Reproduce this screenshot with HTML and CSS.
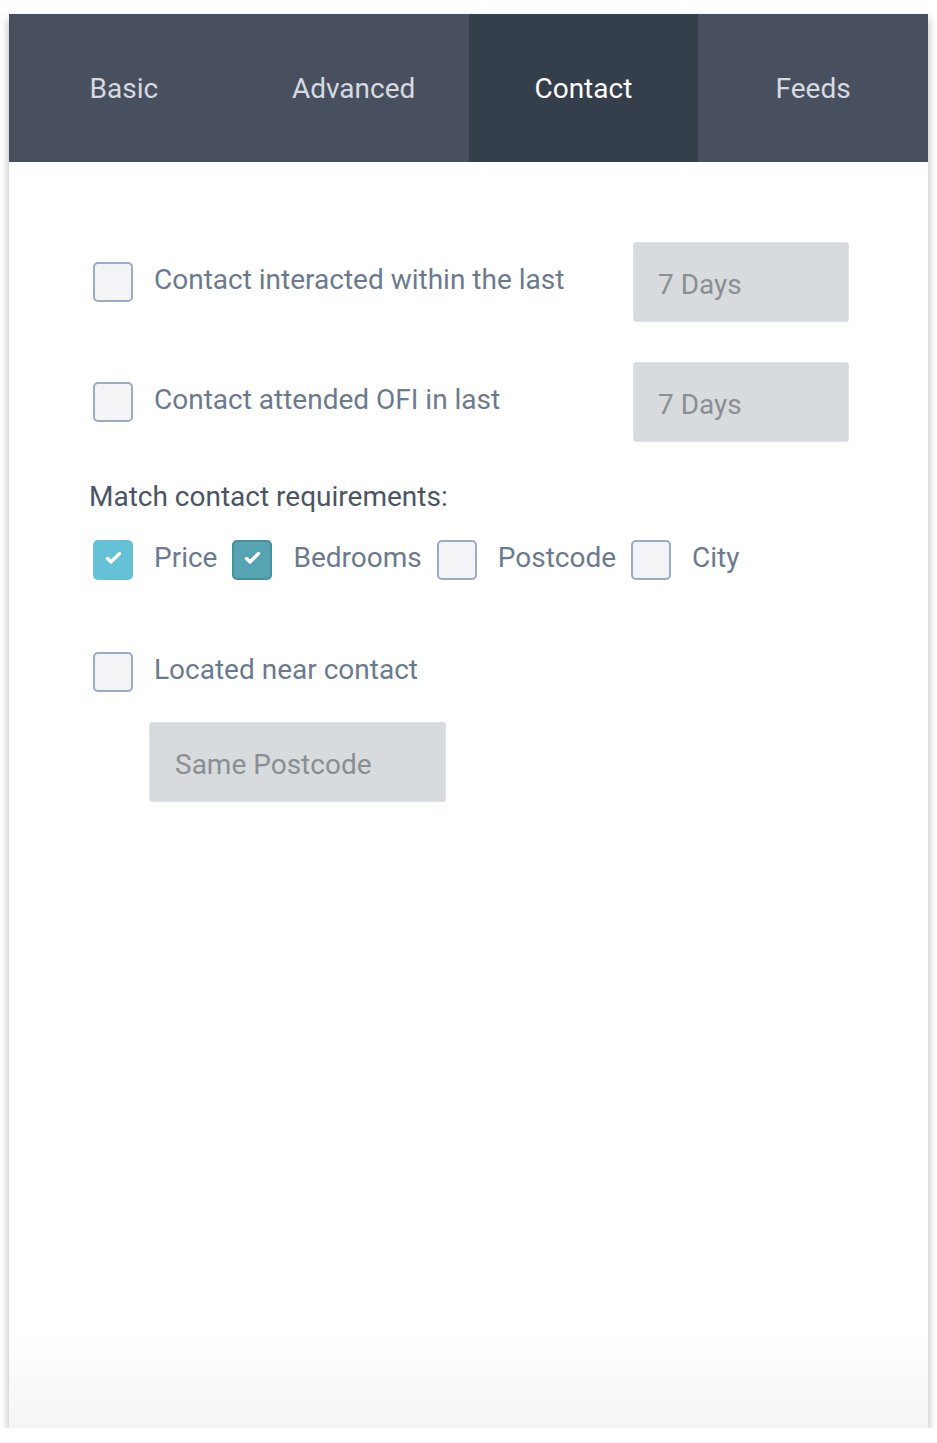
FILE: index.html
```html
<!DOCTYPE html>
<html lang="en">
<head>
    <meta charset="UTF-8">
    <meta name="viewport" content="width=device-width, initial-scale=1.0">
    <title>Contact Filters</title>
    <link rel="stylesheet" href="styles.css">
</head>
<body>
    <div class="panel">
        <div class="tabs">
            <div class="tab">Basic</div>
            <div class="tab">Advanced</div>
            <div class="tab active">Contact</div>
            <div class="tab">Feeds</div>
        </div>

        <div class="content">
            <div class="row">
                <span class="box"></span>
                <span class="label">Contact interacted within the last</span>
                <div class="select">7 Days</div>
            </div>

            <div class="row second">
                <span class="box"></span>
                <span class="label">Contact attended OFI in last</span>
                <div class="select">7 Days</div>
            </div>

            <h3 class="heading">Match contact requirements:</h3>

            <div class="match">
                <span class="box checked light">
                    <svg viewBox="0 0 36 36" width="36" height="36"><path d="M12.5 16.5 L16 20 L24.5 11.5" fill="none" stroke="#fff" stroke-width="3.4" stroke-linecap="round" stroke-linejoin="round"/></svg>
                </span>
                <span class="label">Price</span>
                <span class="box checked dark">
                    <svg viewBox="0 0 36 36" width="36" height="36"><path d="M12.5 16.5 L16 20 L24.5 11.5" fill="none" stroke="#fff" stroke-width="3.4" stroke-linecap="round" stroke-linejoin="round"/></svg>
                </span>
                <span class="label">Bedrooms</span>
                <span class="box"></span>
                <span class="label">Postcode</span>
                <span class="box"></span>
                <span class="label">City</span>
            </div>

            <div class="row near">
                <span class="box"></span>
                <span class="label">Located near contact</span>
            </div>

            <div class="select wide">Same Postcode</div>
        </div>
    </div>
</body>
</html>
```

FILE: styles.css
```css
body {
    font-family: Roboto, "Noto Sans", Arial, sans-serif;
    background-color: #fff;
    margin: 0;
    padding: 0;
}

.panel {
    width: 919px;
    height: 1414px;
    margin: 14px 0 0 9px;
    background: linear-gradient(to bottom, #fff 0, #fff 1320px, #f5f5f5 1414px);
    box-shadow: 0 5px 9px rgba(0, 0, 0, 0.3);
}

.tabs {
    display: grid;
    grid-template-columns: repeat(4, 1fr);
    height: 148px;
    background-color: #485060;
}

.tab {
    display: flex;
    align-items: center;
    justify-content: center;
    font-size: 28px;
    color: #d6dae0;
}

.tab.active {
    background-color: #353e4b;
    color: #fff;
}

.content {
    padding: 80px 79px 0 80px;
}

.row {
    display: flex;
    align-items: center;
    height: 80px;
}

.row.second {
    margin-top: 40px;
}

.box {
    width: 36px;
    height: 36px;
    margin-left: 4px;
    border: 2px solid #9aabc3;
    border-radius: 5px;
    background-color: #f3f4f6;
    flex-shrink: 0;
}

.box svg {
    display: block;
}

.box.checked.light {
    background-color: #65c1d5;
    border-color: #65c1d5;
}

.box.checked.dark {
    background-color: #56a3b2;
    border-color: #47909f;
}

.label {
    font-size: 28px;
    color: #6b7a8f;
    margin-left: 21px;
    padding-bottom: 6px;
}

.select {
    margin-left: auto;
    box-sizing: content-box;
    width: 190px;
    height: 74px;
    padding: 4px 0 0 24px;
    border: 1px solid #dde3e9;
    border-radius: 3px;
    background-color: #d7dbdd;
    color: #8a8e92;
    font-size: 28px;
    display: flex;
    align-items: center;
}

.heading {
    margin: 40px 0 0 0;
    font-size: 28px;
    font-weight: normal;
    line-height: 30px;
    color: #4b5566;
}

.match {
    display: flex;
    align-items: center;
    height: 40px;
    margin-top: 28px;
}

.match .label {
    margin-right: 11px;
}

.row.near {
    height: 40px;
    margin-top: 72px;
}

.select.wide {
    margin: 30px 0 0 60px;
    width: 270px;
    padding-left: 25px;
}
```
